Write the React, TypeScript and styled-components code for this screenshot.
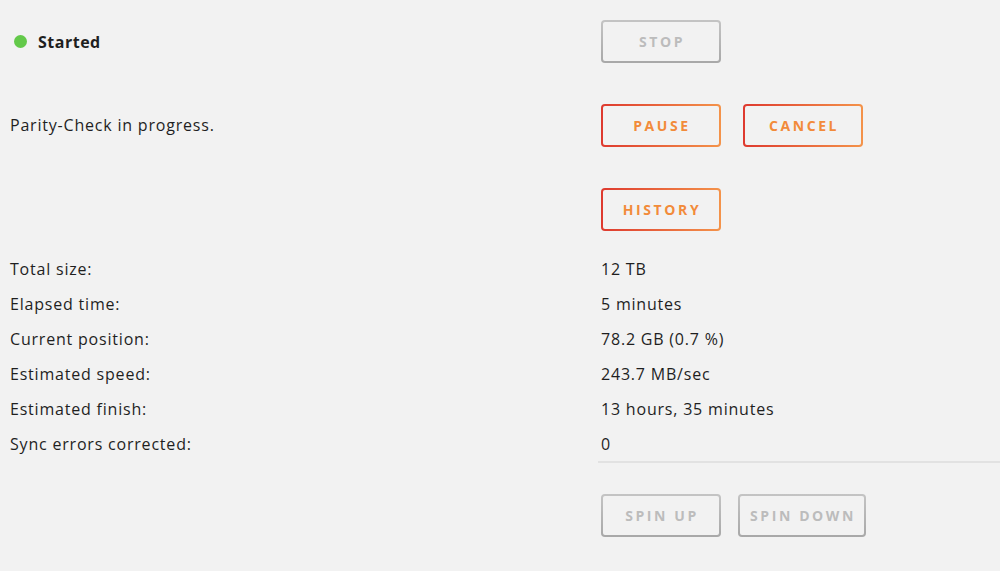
import React from "react";
import styled, { createGlobalStyle, css } from "styled-components";

const GlobalStyle = createGlobalStyle`
  html, body {
    margin: 0;
    padding: 0;
    background: #f2f2f2;
  }
  body {
    font-family: "Open Sans", "Liberation Sans", sans-serif;
    color: #1f1f1f;
    font-size: 16px;
  }
`;

const Page = styled.div`
  display: grid;
  grid-template-columns: 591px 1fr;
  align-content: start;
  padding-left: 10px;
  background: #f2f2f2;
  min-height: 571px;
  box-sizing: border-box;
`;

const Cell = styled.div<{ $tall?: boolean; $first?: boolean }>`
  display: flex;
  align-items: center;
  height: ${(p) => (p.$first ? "83px" : p.$tall ? "84px" : "35px")};
  gap: 22px;
`;

const Status = styled.span`
  display: flex;
  align-items: center;
  gap: 11px;
  font-weight: 700;
  letter-spacing: 0.5px;
  padding-left: 4px;
`;

const Dot = styled.span`
  width: 13px;
  height: 13px;
  border-radius: 50%;
  background: #63c94a;
`;

const Label = styled.span`
  font-size: 16px;
  line-height: 20px;
  letter-spacing: 0.8px;
`;

const Divider = styled.div`
  grid-column: 2;
  height: 2px;
  margin-left: -3px;
  background: #e2e2e2;
`;

const SpinCell = styled.div`
  grid-column: 2;
  display: flex;
  gap: 17px;
  padding-top: 31px;
`;

const Button = styled.button<{ $disabled?: boolean }>`
  box-sizing: border-box;
  min-width: 120px;
  height: 43px;
  padding: 0 8px 0 10px;
  border: 2px solid transparent;
  border-radius: 4px;
  font-family: "Open Sans", "Liberation Sans", sans-serif;
  font-size: 14px;
  font-weight: 700;
  letter-spacing: 2.6px;
  text-transform: uppercase;
  cursor: pointer;
  ${(p) =>
    p.$disabled
      ? css`
          color: #bcbcbc;
          background: linear-gradient(#f2f2f2, #f2f2f2) padding-box,
            linear-gradient(180deg, #c4c4c4, #a8a8a8) border-box;
          cursor: default;
        `
      : css`
          color: #f28b3a;
          background: linear-gradient(#f2f2f2, #f2f2f2) padding-box,
            linear-gradient(90deg, #de3a2f, #f4934a) border-box;
        `}
`;

const rows: [string, string][] = [
  ["Total size:", "12 TB"],
  ["Elapsed time:", "5 minutes"],
  ["Current position:", "78.2 GB (0.7 %)"],
  ["Estimated speed:", "243.7 MB/sec"],
  ["Estimated finish:", "13 hours, 35 minutes"],
  ["Sync errors corrected:", "0"],
];

export default function App() {
  return (
    <>
      <GlobalStyle />
      <Page>
        <Cell $first>
          <Status>
            <Dot />
            Started
          </Status>
        </Cell>
        <Cell $first>
          <Button $disabled>Stop</Button>
        </Cell>

        <Cell $tall>
          <Label>Parity-Check in progress.</Label>
        </Cell>
        <Cell $tall>
          <Button>Pause</Button>
          <Button>Cancel</Button>
        </Cell>

        <Cell $tall />
        <Cell $tall>
          <Button>History</Button>
        </Cell>

        {rows.map(([k, v]) => (
          <React.Fragment key={k}>
            <Cell>
              <Label>{k}</Label>
            </Cell>
            <Cell>
              <Label>{v}</Label>
            </Cell>
          </React.Fragment>
        ))}

        <Divider />
        <SpinCell>
          <Button $disabled>Spin Up</Button>
          <Button $disabled>Spin Down</Button>
        </SpinCell>
      </Page>
    </>
  );
}
